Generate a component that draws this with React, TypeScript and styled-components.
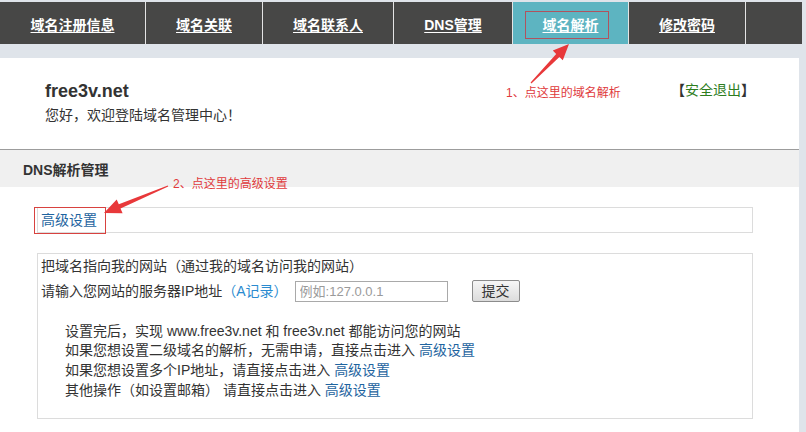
import React from "react";
import styled, { createGlobalStyle } from "styled-components";

const FONT = `"Liberation Sans", "Noto Sans CJK SC", sans-serif`;

const GlobalStyle = createGlobalStyle`
  html, body {
    margin: 0;
    padding: 0;
    background: #dfe4ea;
    font-family: ${FONT};
    color: #333;
  }
  * { box-sizing: border-box; }
`;

const Page = styled.div`
  position: relative;
  width: 806px;
  height: 432px;
  overflow: hidden;
  background: #dfe4ea;
  padding-top: 2px;
`;

const Nav = styled.nav`
  display: flex;
  width: 802px;
  height: 42px;
  background: #474746;
`;

const Tab = styled.a<{ $w?: number; $active?: boolean; $last?: boolean }>`
  flex: ${(p) => (p.$w ? `0 0 ${p.$w}px` : "1 1 auto")};
  display: flex;
  align-items: center;
  justify-content: center;
  background: ${(p) => (p.$active ? "#5db4c1" : "transparent")};
  border-right: ${(p) => (p.$last ? "none" : "1px solid #e4e4e4")};
  color: #fff;
  font-size: 14px;
  font-weight: bold;
  text-decoration: underline;
  text-underline-offset: 2px;
  line-height: 20px;
  padding-top: 4px;
`;

const Panel = styled.main`
  margin-top: 14px;
  width: 799px;
  height: 400px;
  background: #fff;
`;

const Header = styled.header`
  display: flex;
  justify-content: space-between;
  align-items: flex-start;
  padding: 22px 44px 24px 45px;
  height: 91px;
`;

const SiteBlock = styled.div`
  display: flex;
  flex-direction: column;
`;

const SiteName = styled.div`
  font-size: 18px;
  font-weight: bold;
  line-height: 22px;
  color: #333;
`;

const Welcome = styled.div`
  margin-top: 3px;
  font-size: 14px;
  line-height: 20px;
  color: #333;
`;

const Logout = styled.div`
  font-size: 14px;
  line-height: 20px;
  color: #333;
  font-weight: bold;
  span {
    color: #2e7d1e;
    font-weight: normal;
  }
`;

const SectionTitle = styled.div`
  border-top: 1px solid #9c9c9c;
  background: #f0f0f0;
  height: 38px;
  padding: 10px 0 0 23px;
  font-size: 14px;
  font-weight: bold;
  line-height: 20px;
  color: #333;
`;

const Content = styled.section`
  padding: 20px 46px 0 37px;
`;

const LinkBar = styled.div`
  position: relative;
  height: 26px;
  border: 1px solid #dcdcdc;
  padding-left: 3px;
  display: flex;
  align-items: center;
`;

const Link = styled.a<{ $bright?: boolean }>`
  color: ${(p) => (p.$bright ? "#2a8bd0" : "#1e64a0")};
  font-size: 14px;
  line-height: 20px;
  text-decoration: none;
`;

const Highlight = styled.div<{ $color: string }>`
  position: absolute;
  border: 1.5px solid ${(p) => p.$color};
  pointer-events: none;
`;

const FormBox = styled.div`
  margin-top: 20px;
  border: 1px solid #dcdcdc;
  padding: 3px 3px 18px 3px;
  font-size: 14px;
  color: #333;
`;

const Line = styled.div`
  line-height: 18px;
`;

const InputRow = styled.div`
  margin-top: 5px;
  height: 22px;
  display: flex;
  align-items: center;
  line-height: 20px;
`;

const IpInput = styled.input`
  margin-left: 7px;
  width: 153px;
  height: 21px;
  border: 1px solid #a9a9a9;
  padding: 0 4px;
  font-family: ${FONT};
  font-size: 13px;
  color: #333;
  &::placeholder {
    color: #9a9a9a;
  }
`;

const SubmitButton = styled.button`
  margin-left: 24px;
  width: 48px;
  height: 22px;
  border: 1px solid #8c8c8c;
  border-radius: 2px;
  background: linear-gradient(#f6f6f6, #dcdcdc);
  font-family: ${FONT};
  font-size: 14px;
  color: #333;
  padding: 0;
  line-height: 20px;
`;

const Notes = styled.div`
  margin: 20px 0 0 24px;
  line-height: 18px;
`;

const Note = styled.div`
  white-space: nowrap;
`;

const AnnotationText = styled.span`
  position: absolute;
  font-size: 12px;
  line-height: 16px;
  color: #e03a3c;
  white-space: nowrap;
`;

const Overlay = styled.svg`
  position: absolute;
  left: 0;
  top: 0;
  pointer-events: none;
`;

function arrowPoints(
  x1: number,
  y1: number,
  x2: number,
  y2: number,
  headLen = 16,
  headW = 14,
  shaftW = 4.5
) {
  const dx = x2 - x1;
  const dy = y2 - y1;
  const len = Math.hypot(dx, dy);
  const ux = dx / len;
  const uy = dy / len;
  const nx = -uy;
  const ny = ux;
  const bx = x2 - ux * headLen;
  const by = y2 - uy * headLen;
  const pts = [
    [x1 + nx * 0.6, y1 + ny * 0.6],
    [bx + (nx * shaftW) / 2, by + (ny * shaftW) / 2],
    [bx + (nx * headW) / 2, by + (ny * headW) / 2],
    [x2, y2],
    [bx - (nx * headW) / 2, by - (ny * headW) / 2],
    [bx - (nx * shaftW) / 2, by - (ny * shaftW) / 2],
    [x1 - nx * 0.6, y1 - ny * 0.6],
  ];
  return pts.map((p) => `${p[0].toFixed(1)},${p[1].toFixed(1)}`).join(" ");
}

const tabs = [
  { label: "域名注册信息", w: 146 },
  { label: "域名关联", w: 117 },
  { label: "域名联系人", w: 131 },
  { label: "DNS管理", w: 119 },
  { label: "域名解析", w: 116, active: true },
  { label: "修改密码", w: 117 },
];

export default function App() {
  return (
    <>
      <GlobalStyle />
      <Page>
        <Nav>
          {tabs.map((t) => (
            <Tab key={t.label} $w={t.w} $active={t.active}>
              {t.label}
            </Tab>
          ))}
          <Tab $last aria-hidden />
        </Nav>

        <Panel>
          <Header>
            <SiteBlock>
              <SiteName>free3v.net</SiteName>
              <Welcome>您好，欢迎登陆域名管理中心！</Welcome>
            </SiteBlock>
            <Logout>
              【<span>安全退出</span>】
            </Logout>
          </Header>

          <SectionTitle>DNS解析管理</SectionTitle>

          <Content>
            <LinkBar>
              <Link>高级设置</Link>
              <Highlight
                $color="#d8423f"
                style={{ left: -4, top: -1, width: 72, height: 27 }}
              />
            </LinkBar>

            <FormBox>
              <Line>把域名指向我的网站（通过我的域名访问我的网站）</Line>
              <InputRow>
                请输入您网站的服务器IP地址<Link $bright>（A记录）</Link>
                <IpInput placeholder="例如:127.0.0.1" />
                <SubmitButton>提交</SubmitButton>
              </InputRow>
              <Notes>
                <Note>设置完后，实现 www.free3v.net 和 free3v.net 都能访问您的网站</Note>
                <Note>
                  如果您想设置二级域名的解析，无需申请，直接点击进入 <Link>高级设置</Link>
                </Note>
                <Note>
                  如果您想设置多个IP地址，请直接点击进入 <Link>高级设置</Link>
                </Note>
                <Note>
                  其他操作（如设置邮箱） 请直接点击进入 <Link>高级设置</Link>
                </Note>
              </Notes>
            </FormBox>
          </Content>
        </Panel>

        <Highlight
          $color="#b0535e"
          style={{ left: 525, top: 11, width: 84, height: 28 }}
        />
        <AnnotationText style={{ left: 506, top: 85 }}>1、点这里的域名解析</AnnotationText>
        <AnnotationText style={{ left: 173, top: 176 }}>2、点这里的高级设置</AnnotationText>

        <Overlay width="806" height="432" viewBox="0 0 806 432">
          <polygon points={arrowPoints(531, 83, 569, 44)} fill="#e8383a" />
          <polygon points={arrowPoints(168, 186, 104, 213, 17, 15, 4.5)} fill="#e8383a" />
        </Overlay>
      </Page>
    </>
  );
}
